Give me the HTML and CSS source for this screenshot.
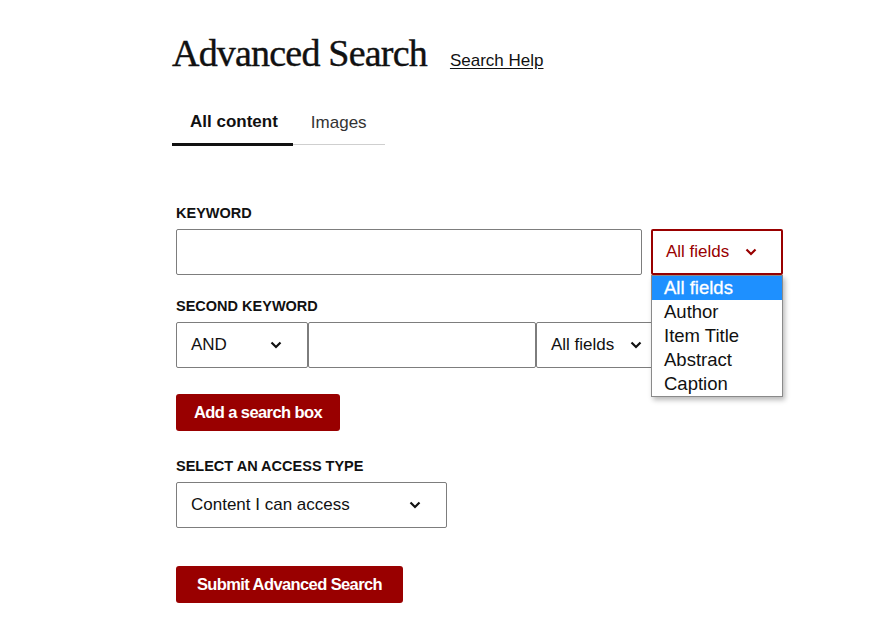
FILE: index.html
```html
<!DOCTYPE html>
<html lang="en">
<head>
<meta charset="utf-8">
<title>Advanced Search</title>
<link rel="stylesheet" href="styles.css">
</head>
<body>
<main class="page">
  <header class="head">
    <h1 class="title">Advanced Search</h1>
    <a class="help" href="#">Search Help</a>
  </header>

  <nav class="tabs">
    <span class="tab tab-active">All content</span>
    <span class="tab">Images</span>
  </nav>

  <form class="form">
    <div class="group">
      <div class="label">KEYWORD</div>
      <div class="row row-gap">
        <div class="input input-wide"></div>
        <div class="select-wrap">
          <div class="select select-open">
            <span>All fields</span>
            <svg class="chev" width="12" height="8" viewBox="0 0 12 8"><polyline points="1.5,1.5 6,6 10.5,1.5" fill="none" stroke="currentColor" stroke-width="2.2"/></svg>
          </div>
          <ul class="menu">
            <li class="opt opt-sel">All fields</li>
            <li class="opt">Author</li>
            <li class="opt">Item Title</li>
            <li class="opt">Abstract</li>
            <li class="opt">Caption</li>
          </ul>
        </div>
      </div>
    </div>

    <div class="group">
      <div class="label">SECOND KEYWORD</div>
      <div class="row">
        <div class="select select-op">
          <span>AND</span>
          <svg class="chev" width="12" height="8" viewBox="0 0 12 8"><polyline points="1.5,1.5 6,6 10.5,1.5" fill="none" stroke="currentColor" stroke-width="2.2"/></svg>
        </div>
        <div class="input input-mid"></div>
        <div class="select select-field">
          <span>All fields</span>
          <svg class="chev" width="12" height="8" viewBox="0 0 12 8"><polyline points="1.5,1.5 6,6 10.5,1.5" fill="none" stroke="currentColor" stroke-width="2.2"/></svg>
        </div>
      </div>
    </div>

    <button type="button" class="btn btn-add">Add a search box</button>

    <div class="group group-access">
      <div class="label">SELECT AN ACCESS TYPE</div>
      <div class="select select-access">
        <span>Content I can access</span>
        <svg class="chev" width="12" height="8" viewBox="0 0 12 8"><polyline points="1.5,1.5 6,6 10.5,1.5" fill="none" stroke="currentColor" stroke-width="2.2"/></svg>
      </div>
    </div>

    <button type="button" class="btn btn-submit">Submit Advanced Search</button>
  </form>
</main>
</body>
</html>
```

FILE: styles.css
```css
* { box-sizing: border-box; }

html, body {
  margin: 0;
  padding: 0;
  background: #fff;
}

body {
  font-family: "Liberation Sans", Arial, sans-serif;
  color: #111;
}

.page {
  padding: 31px 0 0 172px;
}

.head {
  display: flex;
  align-items: baseline;
  gap: 23px;
  height: 44px;
}

.title {
  margin: 0;
  font-family: "Liberation Serif", "Times New Roman", serif;
  font-weight: 400;
  font-size: 38px;
  line-height: 44px;
  letter-spacing: -0.8px;
  color: #111;
  -webkit-text-stroke: 0.4px #111;
}

.help {
  font-size: 17px;
  color: #111;
  text-decoration: underline;
  text-underline-offset: 2px;
}

.tabs {
  display: flex;
  align-items: flex-end;
  margin-top: 25px;
}

.tab {
  padding: 12px 18px 11px;
  font-size: 17px;
  line-height: 20px;
  color: #333;
  border-bottom: 1px solid #cfcfcf;
  margin-bottom: 1px;
}

.tab-active {
  font-weight: 700;
  color: #111;
  padding-right: 15px;
  border-bottom: 3px solid #111;
  margin-bottom: 0;
}

.form {
  padding-left: 4px;
  margin-top: 58px;
}

.group { margin-bottom: 22px; }

.label {
  font-size: 14.5px;
  line-height: 18px;
  font-weight: 700;
  color: #111;
  margin-bottom: 7px;
}

.row {
  display: flex;
}

.row-gap { gap: 9px; }

.input {
  height: 46px;
  border: 1px solid #7d7d7d;
  border-radius: 2px;
  background: #fff;
}

.input-wide { width: 466px; }
.input-mid { width: 228px; }

.select-wrap {
  position: relative;
}

.select {
  height: 46px;
  width: 132px;
  display: flex;
  align-items: center;
  justify-content: space-between;
  padding: 0 25px 0 14px;
  border: 1px solid #7d7d7d;
  border-radius: 2px;
  font-size: 17px;
  color: #111;
  background: #fff;
}

.select-open {
  border: 2px solid #990000;
  padding-left: 13px;
  padding-right: 24px;
  color: #990000;
}

.chev { display: block; }

.select-access { width: 271px; }

.menu {
  position: absolute;
  top: 100%;
  left: 0;
  width: 132px;
  margin: 0;
  padding: 0;
  list-style: none;
  background: #fff;
  border: 1px solid #8a8a8a;
  box-shadow: 2px 3px 5px rgba(0, 0, 0, 0.28);
  z-index: 5;
}

.opt {
  height: 24px;
  line-height: 24px;
  padding-left: 12px;
  font-size: 18.5px;
  color: #111;
}

.opt-sel {
  background: #1e90ff;
  color: #fff;
  -webkit-text-stroke: 0.3px #fff;
}

.btn {
  display: block;
  height: 37px;
  padding: 0 15px;
  border: 0;
  border-radius: 3px;
  background: #990000;
  color: #fff;
  font-family: "Liberation Sans", Arial, sans-serif;
  font-size: 16.5px;
  font-weight: 700;
  letter-spacing: -0.6px;
  cursor: pointer;
}

.btn-add { margin-top: 26px; width: 164px; }

.group-access { margin-top: 26px; margin-bottom: 38px; }

.btn-submit { width: 227px; }
```
